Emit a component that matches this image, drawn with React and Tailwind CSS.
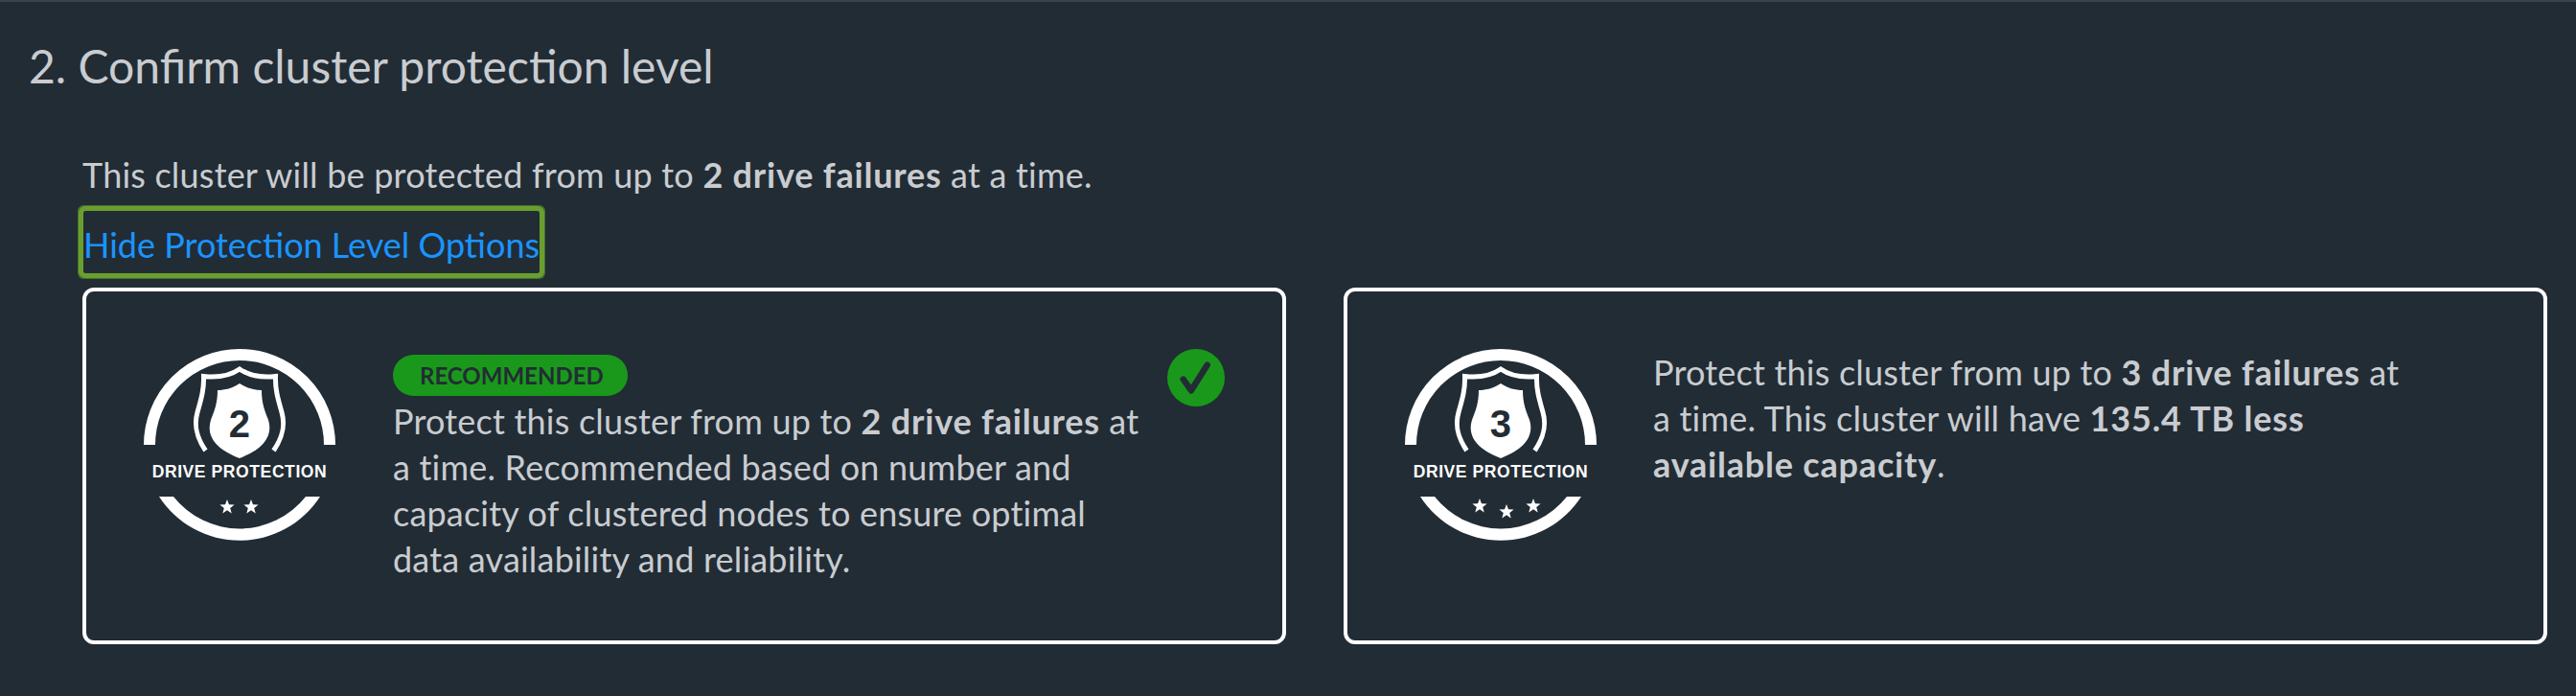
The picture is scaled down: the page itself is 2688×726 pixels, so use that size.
const star = (cx, cy, r) => {
  const pts = []
  for (let i = 0; i < 10; i++) {
    const rad = i % 2 === 0 ? r : r * 0.42
    const a = -Math.PI / 2 + (i * Math.PI) / 5
    pts.push(`${(cx + rad * Math.cos(a)).toFixed(2)},${(cy + rad * Math.sin(a)).toFixed(2)}`)
  }
  return pts.join(' ')
}

function DriveBadge({ level, stars }) {
  return (
    <svg width="200" height="200" viewBox="0 0 200 200" className="shrink-0">
      <path d="M6 100 A94 94 0 0 1 194 100" fill="none" stroke="#fff" strokeWidth="12" />
      <path d="M16 154 A100 100 0 0 0 184 154 L169 154 A88 88 0 0 1 31 154 Z" fill="#fff" />
      {/* outer shield outline, cut off flat at the bottom */}
      <path
        d="M64.5 106 C55 92 52 80 56 66 C60 52 63 42 62.500 28.500 C76 30 90 28 100 21 C110 28 124 30 137.500 28.500 C137 42 140 52 144 66 C148 80 145 92 135.500 106"
        fill="none"
        stroke="#fff"
        strokeWidth="5"
      />
      {/* solid inner shield */}
      <path
        d="M100 36 C92 41 85 43 77 43 C77 56 74 64 70 74 C65 90 74 104 100 114 C126 104 135 90 130 74 C126 64 123 56 123 43 C115 43 108 41 100 36 Z"
        fill="#fff"
      />
      <text x="100" y="92" textAnchor="middle" fill="#222c35" className="font-['Liberation_Sans',sans-serif] text-[40px] font-bold">
        {level}
      </text>
      <text x="100" y="134" textAnchor="middle" fill="#fff" className="font-['Liberation_Sans',sans-serif] text-[17.500px] font-bold tracking-[0.600px]">
        DRIVE PROTECTION
      </text>
      {stars.map(([x, y], i) => (
        <polygon key={i} points={star(x, y, 8)} fill="#fff" />
      ))}
    </svg>
  )
}

function Card({ children }) {
  return (
    <div className="relative flex h-[372px] flex-1 items-start rounded-[12px] border-4 border-white pl-[60px] pt-[60px]">
      {children}
    </div>
  )
}

export default function App() {
  return (
    <div className="h-[726px] overflow-hidden border-t-2 border-[#39434d] bg-[#222c35] font-['Lato',sans-serif] text-[36px] leading-[48px] tracking-[0.200px] text-[#c9ccd0]">
      <h2 className="pl-[30px] pt-[41px] text-[48px] leading-[52px] font-normal tracking-normal">2. Confirm cluster protection level</h2>

      <div className="pl-[86px] pr-[30px] pt-[63px]">
        <p>
          This cluster will be protected from up to <b className="tracking-[0.800px]">2 drive failures</b> at a time.
        </p>
        <div className="mt-[14px] h-[65px]">
          <a className="ml-[1px] inline-block h-[65px] rounded-[2px] leading-[70px] tracking-normal text-[#1a94ff] shadow-[0_0_0_6px_#44702f] outline-[5px] outline-offset-0 outline-[#6a9f2e]">
            Hide Protection Level Options
          </a>
        </div>

        <div className="mt-[15px] flex gap-[60px]">
          <Card>
            <DriveBadge level="2" stars={[[87, 165], [112, 165]]} />
            <div className="ml-[60px] w-[790px] pt-[6px]">
              <span className="block h-[43px] w-[245px] rounded-full bg-[#1a981b] pl-[28px] text-[24px] leading-[43px] font-bold tracking-normal text-[#222c35]">
                RECOMMENDED
              </span>
              <p className="mt-[2px]">
                Protect this cluster from up to <b className="tracking-[0.800px]">2 drive failures</b> at a time. Recommended based on number and capacity of
                clustered nodes to ensure optimal data availability and reliability.
              </p>
            </div>
            <div className="absolute right-[60px] top-[60px] h-[60px] w-[60px] rounded-full bg-[#1a981b]">
              <svg width="60" height="60" viewBox="0 0 60 60" fill="none">
                <path d="M16.700 31.700 L25 43.300 L41.700 16.700" stroke="#222c35" strokeWidth="6.500" strokeLinecap="round" strokeLinejoin="round" />
              </svg>
            </div>
          </Card>

          <Card>
            <DriveBadge level="3" stars={[[78, 164], [106, 170], [134, 164]]} />
            <p className="ml-[59px] w-[790px]">
              Protect this cluster from up to <b className="tracking-[0.800px]">3 drive failures</b> at a time. This cluster will have{' '}
              <b className="tracking-[0.800px]">135.4 TB less available capacity</b>.
            </p>
          </Card>
        </div>
      </div>
    </div>
  )
}
